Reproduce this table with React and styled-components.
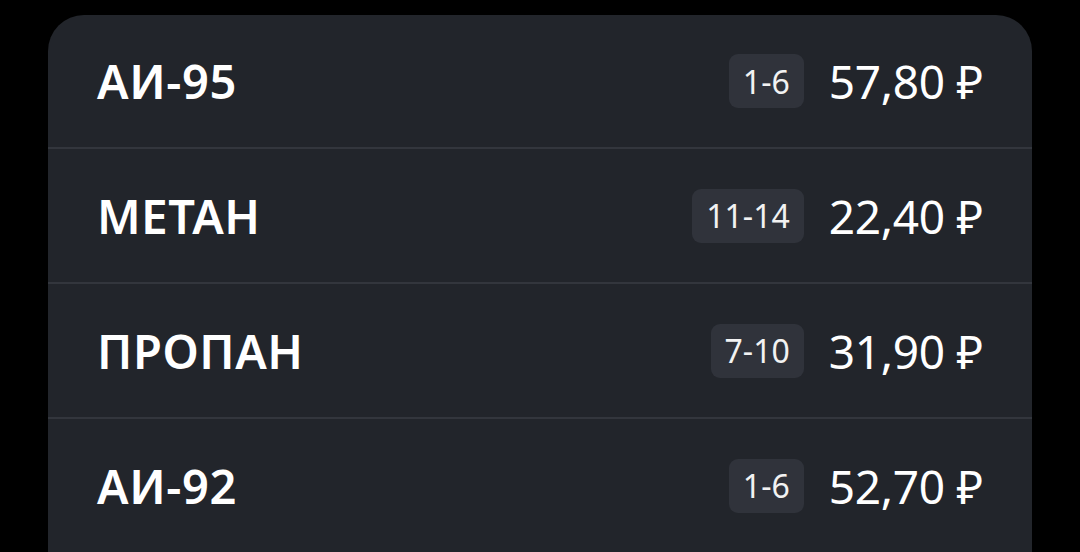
import React from "react";
import styled, { createGlobalStyle } from "styled-components";

const Global = createGlobalStyle`
  html, body { margin: 0; padding: 0; background: #000; }
  body { font-family: "Noto Sans", "Open Sans", sans-serif; }
`;

const Page = styled.div`
  height: 552px;
  overflow: hidden;
  padding: 15px 48px 0;
  box-sizing: border-box;
  background: #000;
`;

const Card = styled.div`
  background: #22252b;
  border-radius: 36px 36px 0 0;
  display: flex;
  flex-direction: column;
  min-height: 600px;
`;

const Row = styled.div`
  height: 132px;
  display: flex;
  align-items: center;
  padding: 0 49px;
  box-sizing: border-box;
  & + & {
    border-top: 2px solid #33363d;
    height: 135px;
  }
`;

const Name = styled.div`
  flex: 1;
  color: #fff;
  font-family: "Noto Sans", sans-serif;
  font-weight: 600;
  font-size: 47px;
  letter-spacing: 0.6px;
`;

const Badge = styled.div`
  background: #30333b;
  color: #f2f2f2;
  border-radius: 9px;
  height: 54px;
  padding: 0 14px;
  display: flex;
  align-items: center;
  font-size: 32px;
  margin-right: 25px;
`;

const Price = styled.div`
  color: #fff;
  font-size: 46px;
  font-weight: 400;
  letter-spacing: -0.3px;
`;

const items = [
  { name: "АИ-95", range: "1-6", price: "57,80 ₽" },
  { name: "МЕТАН", range: "11-14", price: "22,40 ₽" },
  { name: "ПРОПАН", range: "7-10", price: "31,90 ₽" },
  { name: "АИ-92", range: "1-6", price: "52,70 ₽" },
];

export default function App() {
  return (
    <Page>
      <Global />
      <Card>
        {items.map((it) => (
          <Row key={it.name}>
            <Name>{it.name}</Name>
            <Badge>{it.range}</Badge>
            <Price>{it.price}</Price>
          </Row>
        ))}
      </Card>
    </Page>
  );
}
